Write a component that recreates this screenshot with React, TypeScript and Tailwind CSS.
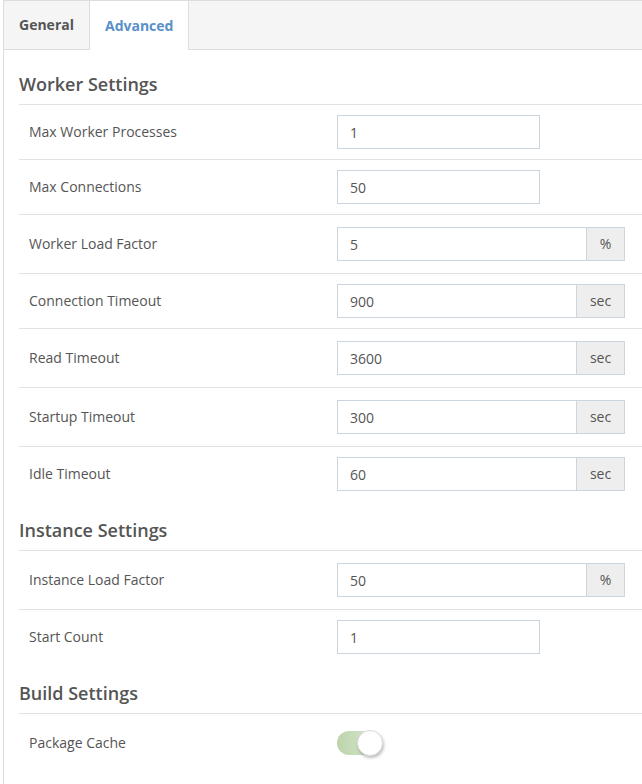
import React from "react";

type Row = {
  label: string;
  value: string;
  unit?: string;
  h: string;
  last?: boolean;
};

const worker: Row[] = [
  { label: "Max Worker Processes", value: "1", h: "h-[55px]" },
  { label: "Max Connections", value: "50", h: "h-[55px]" },
  { label: "Worker Load Factor", value: "5", unit: "%", h: "h-[59px]" },
  { label: "Connection Timeout", value: "900", unit: "sec", h: "h-[55px]" },
  { label: "Read Timeout", value: "3600", unit: "sec", h: "h-[59px]" },
  { label: "Startup Timeout", value: "300", unit: "sec", h: "h-[59px]" },
  { label: "Idle Timeout", value: "60", unit: "sec", h: "h-[54px]", last: true },
];

const instance: Row[] = [
  { label: "Instance Load Factor", value: "50", unit: "%", h: "h-[59px]" },
  { label: "Start Count", value: "1", h: "h-[54px]", last: true },
];

function Heading({ children }: { children: React.ReactNode }) {
  return (
    <h3 className="pt-[17px] pb-[7px] border-b border-[#e2e2e2] text-[18px] leading-[25px] font-semibold text-[#555]">
      {children}
    </h3>
  );
}

function SettingRow({ row }: { row: Row }) {
  return (
    <div
      className={`flex items-center ${row.h} ${row.last ? "" : "border-b border-[#e2e2e2]"}`}
    >
      <div className="w-[318px] pl-[10px] text-sm leading-5">{row.label}</div>
      {row.unit ? (
        <div className="flex w-[288px] h-[34px]">
          <input
            readOnly
            value={row.value}
            className="flex-1 min-w-0 h-full border border-[#ccd5de] bg-white px-3 text-sm text-[#555] outline-none"
          />
          <span
            className={`flex items-center justify-center h-full border border-l-0 border-[#ccd5de] bg-[#eeeeee] text-sm text-[#555] ${row.unit === "%" ? "w-[38px]" : "w-[48px]"}`}
          >
            {row.unit}
          </span>
        </div>
      ) : (
        <input
          readOnly
          value={row.value}
          className="w-[203px] h-[34px] border border-[#ccd5de] bg-white px-3 text-sm text-[#555] outline-none"
        />
      )}
    </div>
  );
}

export default function App() {
  return (
    <div className="min-h-[784px] bg-white pl-[3px] overflow-hidden font-['Open_Sans',sans-serif] text-[#555]">
      <div className="w-[660px] min-h-[784px] border-l border-[#dddddd]">
        {/* Tabs */}
        <div className="flex h-[50px] bg-[#f5f5f5] border-t border-[#dddddd]">
          <div className="flex items-center px-[15px] border-b border-[#dddddd] text-sm font-bold text-[#555]">
            General
          </div>
          <div className="flex items-center px-[15px] bg-white border-x border-[#dddddd] text-sm font-bold text-[#5a90c8]">
            Advanced
          </div>
          <div className="flex-1 border-b border-[#dddddd]" />
        </div>

        {/* Content */}
        <div className="px-[15px] pt-[5px]">
          <Heading>Worker Settings</Heading>
          {worker.map((r) => (
            <SettingRow key={r.label} row={r} />
          ))}

          <Heading>Instance Settings</Heading>
          {instance.map((r) => (
            <SettingRow key={r.label} row={r} />
          ))}

          <Heading>Build Settings</Heading>
          <div className="flex items-center h-[58px]">
            <div className="w-[318px] pl-[10px] text-sm leading-5">Package Cache</div>
            <div className="relative w-[46px] h-[26px]">
              <div className="absolute left-0 top-[1px] w-[44px] h-[24px] rounded-full bg-gradient-to-r from-[#bcd4ab] to-[#dbe9d2]" />
              <div className="absolute right-0 top-0 w-[26px] h-[26px] rounded-full bg-white border border-[#dcdcdc] shadow-[1px_2px_3px_rgba(0,0,0,0.25)]" />
            </div>
          </div>
        </div>
      </div>
    </div>
  );
}
